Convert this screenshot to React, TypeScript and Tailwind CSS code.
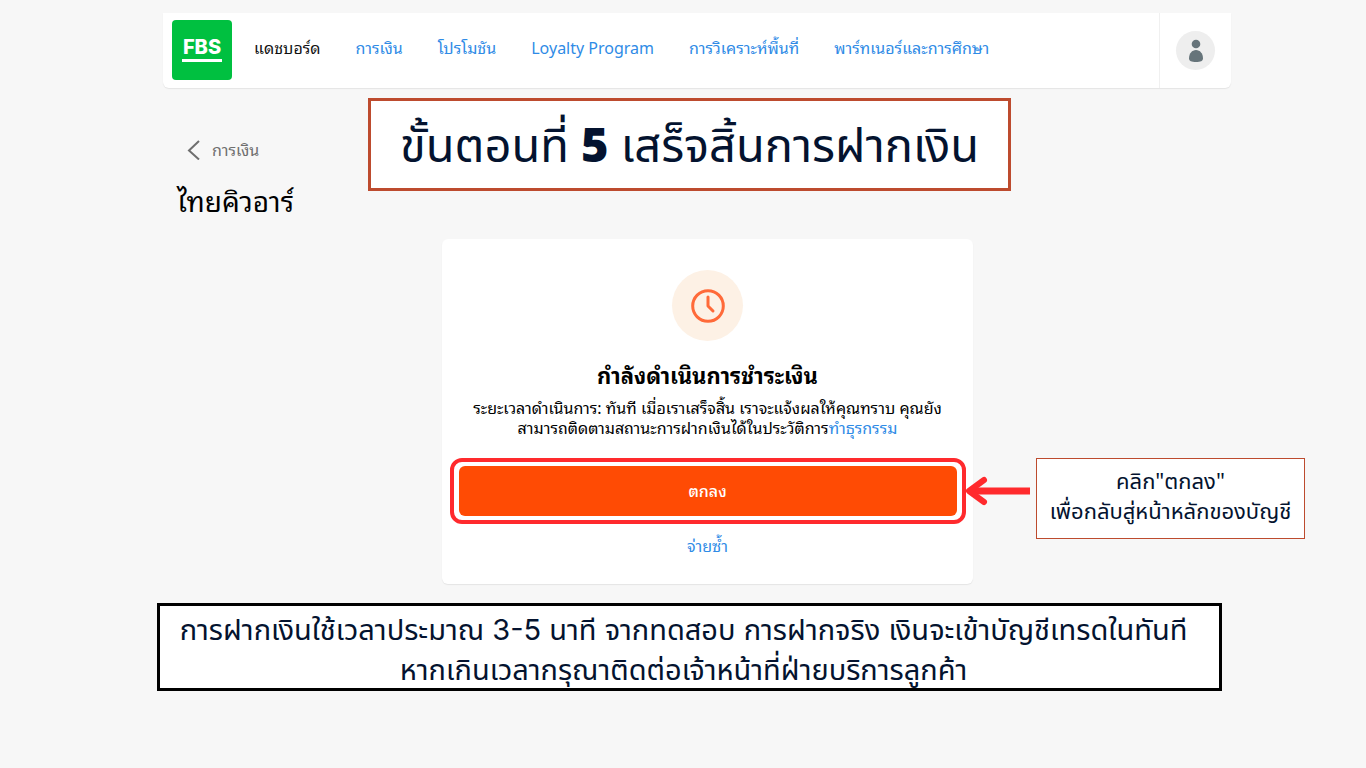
import React from "react";

interface NavItem {
  label: string;
  className: string;
}

const navItems: NavItem[] = [
  { label: "แดชบอร์ด", className: "text-[#111111]" },
  { label: "การเงิน", className: "text-[#2f8be6]" },
  { label: "โปรโมชัน", className: "text-[#2f8be6]" },
  { label: "Loyalty Program", className: "text-[#2f8be6]" },
  { label: "การวิเคราะห์พื้นที่", className: "text-[#2f8be6]" },
  { label: "พาร์ทเนอร์และการศึกษา", className: "text-[#2f8be6]" },
];

const Logo = () => (
  <a
    href="#"
    className="w-[60px] h-[60px] shrink-0 rounded bg-[#00c040] text-white flex flex-col items-center justify-center gap-0.5"
  >
    <span className="font-[Inter] font-extrabold text-[20px] leading-5">FBS</span>
    <span className="w-10 h-[3px] bg-white" />
  </a>
);

const Header = () => (
  <header className="ml-[163px] mr-[135px] h-[75px] bg-white rounded-b-md shadow-[0_1px_1px_#e4e4e4] flex items-center">
    <div className="pl-[9px] pb-0.5">
      <Logo />
    </div>
    <nav className="flex-1 flex gap-[35px] pl-[22px] pb-1.5 text-base whitespace-nowrap">
      {navItems.map((item) => (
        <a key={item.label} href="#" className={item.className}>
          {item.label}
        </a>
      ))}
    </nav>
    <div className="w-[72px] h-full border-l border-[#f0f0f0] flex items-center justify-center">
      <button
        aria-label="Profile"
        className="w-[39px] h-[39px] rounded-full bg-[#eeeeee] flex items-center justify-center"
      >
        <svg width="16" height="24" viewBox="0 0 16 24" fill="#66747a">
          <circle cx="8" cy="5" r="4.3" />
          <path d="M8 11C4 11 1 14.5 1 19.5C1 22 3.5 23 8 23C12.500 23 15 22 15 19.500C15 14.500 12 11 8 11Z" />
        </svg>
      </button>
    </div>
  </header>
);

const PaymentCard = () => (
  <section className="w-[531px] shrink-0 bg-white rounded-md shadow-[0_1px_1px_#e4e4e4] pt-[31px] pb-7 flex flex-col items-center text-black">
    <div className="w-[71px] h-[71px] rounded-full bg-[#fdf1e5] flex items-center justify-center">
      <svg
        width="34"
        height="34"
        viewBox="0 0 34 34"
        fill="none"
        stroke="#ff6a39"
        strokeWidth="3"
        strokeLinecap="round"
        strokeLinejoin="round"
      >
        <circle cx="17" cy="17" r="15.300" />
        <path d="M17 8V17L22 22" />
      </svg>
    </div>
    <h2 className="mt-[18px] text-[22px] leading-8 font-bold">กำลังดำเนินการชำระเงิน</h2>
    <p className="mt-[7px] text-base leading-5 text-center whitespace-nowrap">
      ระยะเวลาดำเนินการ: ทันที เมื่อเราเสร็จสิ้น เราจะแจ้งผลให้คุณทราบ คุณยัง
      <br />
      สามารถติดตามสถานะการฝากเงินได้ในประวัติการ
      <a href="#" className="text-[#2f8be6]">
        ทำธุรกรรม
      </a>
    </p>
    <div className="mt-5 w-[516px] rounded-xl border-4 border-[#ff2a2d] px-[5px] py-1">
      <button className="w-full h-[50px] rounded-md bg-[#ff4b04] text-white text-base font-medium">
        ตกลง
      </button>
    </div>
    <a href="#" className="mt-3 text-base leading-5 text-[#2f8be6]">
      จ่ายซ้ำ
    </a>
  </section>
);

const App = () => {
  return (
    <div className="min-h-screen bg-[#f7f7f7] pt-[13px] pb-10 font-['Noto_Sans','Noto_Sans_Thai_Looped','Loma',sans-serif]">
      <Header />
      <main>
        <div className="flex items-start pl-[177px] pt-2.5">
          <div className="w-[191px] pt-10">
            <a
              href="#"
              className="flex items-center gap-3 pl-2.5 text-base leading-6 text-[#6f6f6f]"
            >
              <svg
                width="13"
                height="20"
                viewBox="0 0 13 20"
                fill="none"
                stroke="currentColor"
                strokeWidth="2"
              >
                <path d="M12 1L2 10.500L12 19.500" />
              </svg>
              การเงิน
            </a>
            <h1 className="mt-[19px] text-[28px] leading-10 text-black">ไทยคิวอาร์</h1>
          </div>
          <div className="w-[643px] h-[93px] border-3 border-[#bd4b2e] bg-white text-[#04132f] font-['Noto_Sans','Noto_Sans_Thai',sans-serif] text-[47px] flex items-center justify-center whitespace-nowrap">
            <p>
              ขั้นตอนที่ <b className="font-['Open_Sans'] font-extrabold">5</b> เสร็จสิ้นการฝากเงิน
            </p>
          </div>
        </div>

        <div className="flex items-start pl-[442px] mt-[18px]">
          <PaymentCard />
          <svg
            className="shrink-0 -ml-2 mt-[237px]"
            width="65"
            height="30"
            viewBox="0 0 65 30"
            fill="none"
            stroke="#ff2a2d"
          >
            <path d="M4 15H65" strokeWidth="7" />
            <path
              d="M19 4L4 15L19 26"
              strokeWidth="6"
              strokeLinecap="round"
              strokeLinejoin="round"
            />
          </svg>
          <div className="ml-1.5 mt-[219px] w-[269px] h-[81px] shrink-0 border border-[#bd4b2e] bg-white text-[#04132f] font-['Noto_Sans','Noto_Sans_Thai',sans-serif] text-[22px] leading-[30px] text-center pt-1.5 whitespace-nowrap">
            คลิก"ตกลง"
            <br />
            เพื่อกลับสู่หน้าหลักของบัญชี
          </div>
        </div>

        <div className="ml-[157px] mr-36 mt-[19px] h-[88px] border-3 border-black bg-white text-[#04132f] font-['Inter','Noto_Sans_Thai',sans-serif] text-[29px] leading-10 text-center pt-1 pr-3 whitespace-nowrap">
          การฝากเงินใช้เวลาประมาณ 3-5 นาที จากทดสอบ การฝากจริง เงินจะเข้าบัญชีเทรดในทันที
          <br />
          หากเกินเวลากรุณาติดต่อเจ้าหน้าที่ฝ่ายบริการลูกค้า
        </div>
      </main>
    </div>
  );
};

export default App;
